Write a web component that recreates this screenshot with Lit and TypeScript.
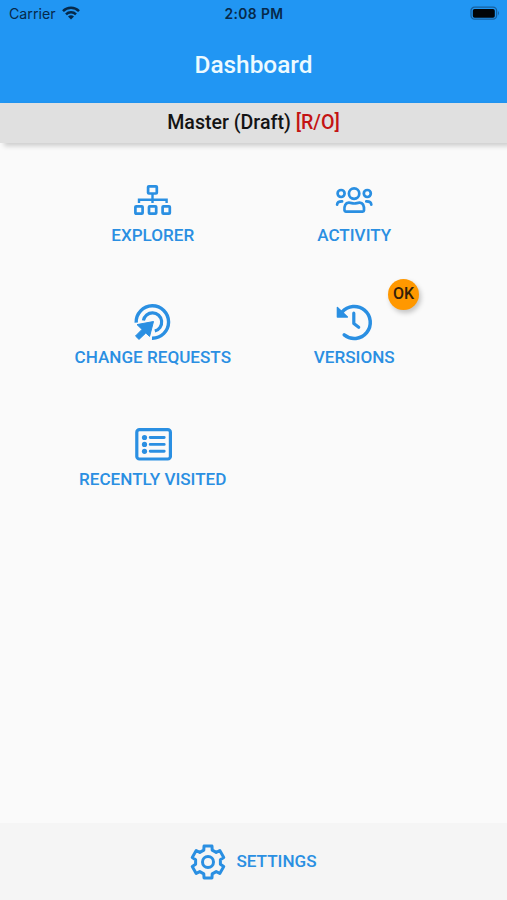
import { LitElement, html, svg, css } from "lit";
import { customElement, property } from "lit/decorators.js";

// Outline of a gear with six trapezoid teeth, centred in a 40x40 box.
function gearPath(): string {
  const steps: [number, number][] = [[12.6, -19.5], [16.4, -14], [16.4, 14], [12.6, 19.5]];
  const points: string[] = [];
  for (let tooth = 0; tooth < 6; tooth++) {
    for (const [radius, offset] of steps) {
      const angle = ((tooth * 60 - 90 + offset) * Math.PI) / 180;
      points.push(`${(20 + radius * Math.cos(angle)).toFixed(2)} ${(20 + radius * Math.sin(angle)).toFixed(2)}`);
    }
  }
  return `M${points.join("L")}Z`;
}

const icons = {
  explorer: svg`
    <g stroke-width="2.7">
      <rect x="15.1" y="6.3" width="8.7" height="7.2" rx="0.8"/>
      <rect x="2.4" y="26.3" width="7.2" height="7.4" rx="0.8"/>
      <rect x="16" y="26.3" width="7.2" height="7.4" rx="0.8"/>
      <rect x="29.6" y="26.3" width="7.2" height="7.4" rx="0.8"/>
      <path d="M19.5 14V23M6 23V19.7H33.6V23" stroke-width="2.4"/>
    </g>`,
  activity: svg`
    <g stroke-width="2.7" stroke-linecap="round" transform="translate(.5 0)">
      <circle cx="19.6" cy="13.6" r="5.2"/>
      <circle cx="6.6" cy="13.5" r="3.5"/>
      <circle cx="32.8" cy="13.5" r="3.5"/>
      <path d="M10 30.5C9.6 25.5 11 22.9 14.2 22.7C16.5 22.6 17.5 23.5 19.7 23.5C22 23.5 23 22.6 25.2 22.7C28.5 22.9 29.8 25.5 29.5 30.5Q29.4 31.6 28.3 31.6H11.2Q10.1 31.6 10 30.5Z"/>
      <path d="M2.6 24.6C2.8 22.3 4.4 21.3 7.6 21.4M36.8 24.6C36.6 22.3 35 21.3 31.8 21.4"/>
    </g>`,
  requests: svg`
    <g transform="translate(0 -2)">
      <path d="M3.2 22.6A16.2 16.2 0 1 1 19 38.2" stroke-width="3.4"/>
      <path d="M10.4 20.6A9.2 9.2 0 1 1 21.8 31" stroke-width="3.2"/>
      <path d="M20.5 21.5L16.6 36.4L12.8 33L6 39.4L2.5 36L9 29.4L4 24.6Z" fill="currentColor" stroke-width="1" stroke-linejoin="round"/>
    </g>`,
  versions: svg`
    <g transform="translate(0 -2)">
      <path d="M8 12.2A16 16 0 1 1 10.2 34.9" stroke-width="3.5" stroke-linecap="round"/>
      <path d="M3.4 7.4V17H13.4Z" fill="currentColor" stroke-width="1.4" stroke-linejoin="round"/>
      <path d="M19.8 13.2V23.5L24.7 27.2" stroke-width="3.2" stroke-linecap="round" stroke-linejoin="round"/>
    </g>`,
  visited: svg`
    <g transform="translate(0 -4)">
      <rect x="3.8" y="9.6" width="33.6" height="29.4" rx="2.6" stroke-width="3.2"/>
      <g fill="currentColor" stroke="none">
        <circle cx="11.5" cy="17.5" r="2.6"/><circle cx="11.5" cy="24.4" r="2.6"/><circle cx="11.5" cy="31.3" r="2.6"/>
      </g>
      <path d="M17.2 17.5H31.2M17.2 24.4H31.2M17.2 31.3H31.2" stroke-width="2.9" stroke-linecap="round"/>
    </g>`,
  settings: svg`
    <path d="${gearPath()}" stroke-width="3" stroke-linejoin="round"/>
    <circle cx="20" cy="20" r="5.5" stroke-width="3"/>`,
};

type IconName = keyof typeof icons;

@customElement("line-icon")
export class LineIcon extends LitElement {
  @property() name: IconName = "explorer";

  static styles = css`
    :host { display: block; width: 40px; height: 40px; }
    .icon { display: block; overflow: visible; }
  `;

  render() {
    return html`<svg class="icon" width="40" height="40" viewBox="0 0 40 40" fill="none" stroke="currentColor">${icons[this.name]}</svg>`;
  }
}

@customElement("dash-tile")
export class DashTile extends LitElement {
  @property() icon: IconName = "explorer";
  @property() label = "";
  @property() badge = "";

  static styles = css`
    :host {
      position: relative;
      display: flex;
      flex-direction: column;
      align-items: center;
      color: #2a8fe2;
    }
    .label {
      margin-top: 4px;
      font-size: 17.1px;
      font-weight: 500;
      line-height: 22px;
      white-space: nowrap;
    }
    .badge {
      position: absolute;
      top: -23px;
      right: 36px;
      width: 31px;
      height: 31px;
      border-radius: 50%;
      background: #ff9800;
      color: #33200a;
      font-size: 16px;
      font-weight: 500;
      line-height: 30px;
      text-align: center;
      box-shadow: 2px 3px 5px rgba(0, 0, 0, 0.22);
    }
  `;

  render() {
    return html`
      <line-icon .name=${this.icon}></line-icon>
      <span class="label">${this.label}</span>
      ${this.badge ? html`<span class="badge">${this.badge}</span>` : null}
    `;
  }
}

@customElement("app-root")
export class AppRoot extends LitElement {
  static styles = css`
    :host {
      display: flex;
      flex-direction: column;
      height: 900px;
      overflow: hidden;
      background: #fafafa;
      font-family: Roboto, "Liberation Sans", sans-serif;
    }
    .header { height: 103px; background: #2196f3; }
    .status {
      display: grid;
      grid-template-columns: 1fr auto 1fr;
      align-items: center;
      height: 27px;
      padding: 0 7px 0 9px;
      color: #06294a;
      font-family: Inter, sans-serif;
      font-size: 14.2px;
    }
    .carrier { display: flex; align-items: center; gap: 6px; }
    .carrier svg { margin-top: -2px; }
    .time { margin-right: 1px; font-size: 13.8px; font-weight: 600; letter-spacing: 0.4px; }
    .battery { justify-self: end; }
    .title {
      margin: 0;
      color: #ecfaff;
      font-size: 24.4px;
      font-weight: 500;
      line-height: 75px;
      text-align: center;
    }
    .branch {
      height: 40px;
      background: #e0e0e0;
      box-shadow: 4px 3px 5px rgba(0, 0, 0, 0.18);
      color: #141414;
      font-size: 19.6px;
      font-weight: 500;
      line-height: 39px;
      text-align: center;
    }
    .mode { color: #c41414; }
    .tiles {
      flex: 1;
      display: grid;
      grid-template-columns: repeat(2, 201.5px);
      grid-auto-rows: 122px;
      justify-content: center;
      padding-top: 37px;
    }
    .footer {
      display: flex;
      align-items: center;
      justify-content: center;
      gap: 8px;
      height: 77px;
      padding-right: 2px;
      background: #f5f5f5;
      color: #2a8fe2;
      font-size: 17.1px;
      font-weight: 500;
    }
    .settings { margin-top: -2px; }
  `;

  render() {
    return html`
      <header class="header">
        <div class="status">
          <span class="carrier">
            <span>Carrier</span>
            <svg width="18" height="14" viewBox="0 0 18 14" fill="none" stroke="currentColor" stroke-width="2.5">
              <path d="M1 5.1A11.4 11.4 0 0 1 17 5.1M4 8.4A7.1 7.1 0 0 1 14 8.4"/>
              <path d="M9 13.6L6 10.6A4.3 4.3 0 0 1 12 10.6Z" fill="currentColor" stroke="none"/>
            </svg>
          </span>
          <span class="time">2:08 PM</span>
          <svg class="battery" width="30" height="15" viewBox="0 0 30 15">
            <rect x="1" y="1.2" width="25.6" height="12" rx="3.6" fill="none" stroke="#17609f" stroke-width="1.3"/>
            <rect x="2.8" y="2.9" width="22" height="8.8" rx="1.8" fill="#020508"/>
            <path d="M28 5Q29.9 7.2 28 9.4Z" fill="#17609f"/>
          </svg>
        </div>
        <h1 class="title">Dashboard</h1>
      </header>
      <div class="branch">Master (Draft) <span class="mode">[R/O]</span></div>
      <main class="tiles">
        <dash-tile icon="explorer" label="EXPLORER"></dash-tile>
        <dash-tile icon="activity" label="ACTIVITY"></dash-tile>
        <dash-tile icon="requests" label="CHANGE REQUESTS"></dash-tile>
        <dash-tile icon="versions" label="VERSIONS" badge="OK"></dash-tile>
        <dash-tile icon="visited" label="RECENTLY VISITED"></dash-tile>
      </main>
      <footer class="footer">
        <line-icon name="settings"></line-icon>
        <span class="settings">SETTINGS</span>
      </footer>
    `;
  }
}
